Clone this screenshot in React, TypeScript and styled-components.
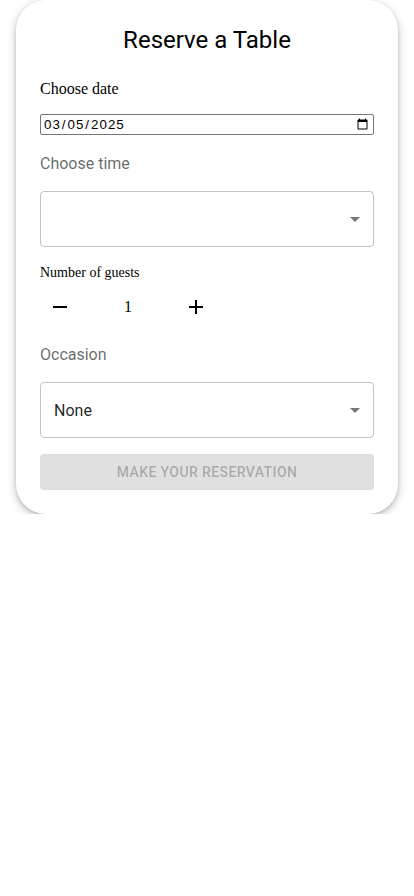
import React, { useState } from "react";
import styled, { createGlobalStyle } from "styled-components";

const GlobalStyle = createGlobalStyle`
  html, body { margin: 0; padding: 0; background: #ffffff; }
  body { font-family: "Liberation Serif", "Times New Roman", serif; }
  * { box-sizing: border-box; }
`;

const Page = styled.div`
  padding: 0 16px;
`;

const Card = styled.form`
  background: #fff;
  border-radius: 30px;
  box-shadow: 0 3px 8px rgba(0, 0, 0, 0.25), 0 1px 3px rgba(0, 0, 0, 0.12);
  padding: 24px 24px 24px;
  display: flex;
  flex-direction: column;
`;

const Title = styled.h1`
  margin: 0;
  font-family: Roboto, "Noto Sans", sans-serif;
  font-weight: 400;
  font-size: 24px;
  line-height: 32px;
  color: #000;
  text-align: center;
`;

const PlainLabel = styled.label<{ $size: number; $mt: number }>`
  display: block;
  font-family: "Liberation Serif", "Times New Roman", serif;
  font-size: ${(p) => p.$size}px;
  line-height: ${(p) => Math.round(p.$size * 1.15)}px;
  color: #000;
  margin-top: ${(p) => p.$mt}px;
`;

const DateInput = styled.input`
  margin-top: 16px;
  width: 100%;
  height: 21px;
  font-family: "Liberation Sans", Arial, sans-serif;
  font-size: 13.33px;
  letter-spacing: 1px;
  color: #000;
  border: 1px solid #767676;
  border-radius: 2px;
  padding: 1px 2px;
`;

const FieldLabel = styled.div<{ $mt: number }>`
  margin-top: ${(p) => p.$mt}px;
  font-family: Roboto, "Noto Sans", sans-serif;
  font-size: 16px;
  line-height: 24px;
  color: rgba(0, 0, 0, 0.6);
`;

const SelectBox = styled.div`
  margin-top: 15px;
  height: 56px;
  border: 1px solid rgba(0, 0, 0, 0.23);
  border-radius: 4px;
  display: flex;
  align-items: center;
  padding: 0 6px 0 13px;
  font-family: Roboto, "Noto Sans", sans-serif;
  font-size: 16px;
  color: rgba(0, 0, 0, 0.87);
`;

const SelectValue = styled.span`
  flex: 1;
`;

const ArrowIcon = styled.svg`
  width: 24px;
  height: 24px;
  fill: rgba(0, 0, 0, 0.54);
`;

const Counter = styled.div`
  margin-top: 6px;
  display: flex;
  align-items: center;
  height: 40px;
`;

const IconButton = styled.button`
  width: 40px;
  height: 40px;
  padding: 8px;
  border: none;
  background: transparent;
  border-radius: 50%;
  display: flex;
  align-items: center;
  justify-content: center;
  cursor: pointer;
  svg {
    width: 24px;
    height: 24px;
    fill: #000;
  }
`;

const Count = styled.span`
  width: 96px;
  text-align: center;
  font-family: "Liberation Serif", "Times New Roman", serif;
  font-size: 16px;
  color: #000;
`;

const SubmitButton = styled.button`
  margin-top: 16px;
  height: 36px;
  border: none;
  border-radius: 4px;
  background: rgba(0, 0, 0, 0.12);
  color: rgba(0, 0, 0, 0.26);
  font-family: Roboto, "Noto Sans", sans-serif;
  font-weight: 500;
  font-size: 14px;
  letter-spacing: 0.4px;
  text-transform: uppercase;
`;

const Arrow = () => (
  <ArrowIcon viewBox="0 0 24 24">
    <path d="M7 10l5 5 5-5z" />
  </ArrowIcon>
);

export default function App() {
  const [guests, setGuests] = useState(1);
  return (
    <Page>
      <GlobalStyle />
      <Card onSubmit={(e) => e.preventDefault()}>
        <Title>Reserve a Table</Title>
        <PlainLabel $size={16} $mt={24} htmlFor="res-date">
          Choose date
        </PlainLabel>
        <DateInput id="res-date" type="date" defaultValue="2025-03-05" />
        <FieldLabel $mt={17}>Choose time</FieldLabel>
        <SelectBox>
          <SelectValue />
          <Arrow />
        </SelectBox>
        <PlainLabel $size={14} $mt={18}>
          Number of guests
        </PlainLabel>
        <Counter>
          <IconButton type="button" aria-label="decrease" onClick={() => setGuests(Math.max(1, guests - 1))}>
            <svg viewBox="0 0 24 24">
              <path d="M19 13H5v-2h14v2z" />
            </svg>
          </IconButton>
          <Count>{guests}</Count>
          <IconButton type="button" aria-label="increase" onClick={() => setGuests(guests + 1)}>
            <svg viewBox="0 0 24 24">
              <path d="M19 13h-6v6h-2v-6H5v-2h6V5h2v6h6v2z" />
            </svg>
          </IconButton>
        </Counter>
        <FieldLabel $mt={16}>Occasion</FieldLabel>
        <SelectBox>
          <SelectValue>None</SelectValue>
          <Arrow />
        </SelectBox>
        <SubmitButton type="submit" disabled>
          Make Your Reservation
        </SubmitButton>
      </Card>
    </Page>
  );
}
